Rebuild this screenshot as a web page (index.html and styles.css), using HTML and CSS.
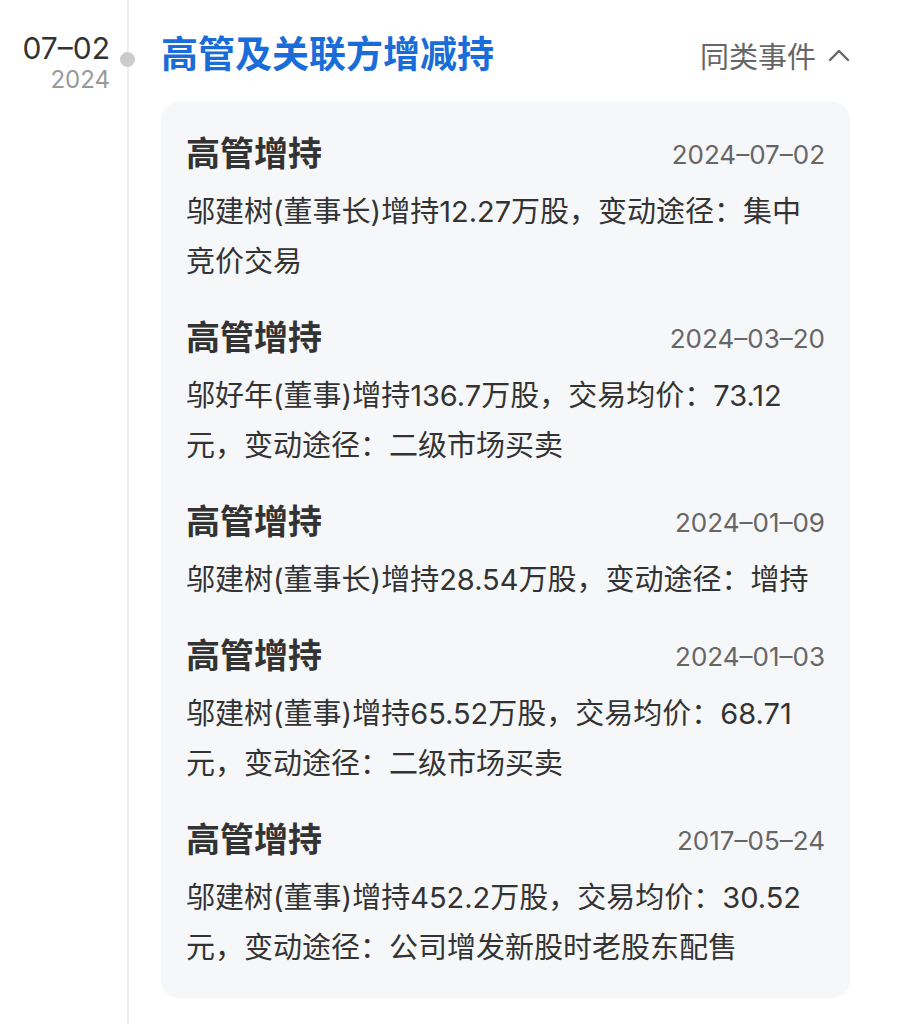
FILE: index.html
```html
<!DOCTYPE html>
<html lang="zh-CN">

<head>
    <meta charset="utf-8">
    <title>高管及关联方增减持</title>
    <link rel="stylesheet" href="styles.css">
</head>

<body>
    <div class="event">
        <div class="event-date">
            <div class="day">07–02</div>
            <div class="year">2024</div>
        </div>

        <div class="event-body">
            <span class="dot"></span>

            <div class="event-head">
                <h1 class="event-title">高管及关联方增减持</h1>
                <div class="similar">
                    同类事件
                    <svg class="chevron" width="22" height="14" viewBox="0 0 22 14">
                        <polyline points="2,12 11,3 20,12" fill="none" stroke="#666" stroke-width="2.4" stroke-linecap="round" stroke-linejoin="round" />
                    </svg>
                </div>
            </div>

            <div class="card">
                <div class="item">
                    <div class="item-head">
                        <span class="item-title">高管增持</span>
                        <span class="item-date">2024–07–02</span>
                    </div>
                    <p class="item-text">邬建树(董事长)增持12.27万股，变动途径：集中竞价交易</p>
                </div>
                <div class="item">
                    <div class="item-head">
                        <span class="item-title">高管增持</span>
                        <span class="item-date">2024–03–20</span>
                    </div>
                    <p class="item-text">邬好年(董事)增持136.7万股，交易均价：73.12元，变动途径：二级市场买卖</p>
                </div>
                <div class="item">
                    <div class="item-head">
                        <span class="item-title">高管增持</span>
                        <span class="item-date">2024–01–09</span>
                    </div>
                    <p class="item-text">邬建树(董事长)增持28.54万股，变动途径：增持</p>
                </div>
                <div class="item">
                    <div class="item-head">
                        <span class="item-title">高管增持</span>
                        <span class="item-date">2024–01–03</span>
                    </div>
                    <p class="item-text">邬建树(董事)增持65.52万股，交易均价：68.71元，变动途径：二级市场买卖</p>
                </div>
                <div class="item">
                    <div class="item-head">
                        <span class="item-title">高管增持</span>
                        <span class="item-date">2017–05–24</span>
                    </div>
                    <p class="item-text">邬建树(董事)增持452.2万股，交易均价：30.52元，变动途径：公司增发新股时老股东配售</p>
                </div>
            </div>
        </div>
    </div>
</body>
</html>
```

FILE: styles.css
```css
body {
    margin: 0;
    font-family: Inter, "Noto Sans CJK SC", sans-serif;
    background-color: #fff;
    color: #333;
}

.event {
    display: flex;
    min-height: 1024px;
}

.event-date {
    width: 110px;
    padding-right: 17px;
    padding-top: 30px;
    text-align: right;
}

.day {
    font-size: 30px;
    line-height: 36px;
    color: #333;
}

.year {
    font-size: 24px;
    line-height: 28px;
    color: #999;
}

.event-body {
    position: relative;
    flex: 1;
    border-left: 2px solid #eeeeee;
    padding: 30px 51px 26px 32px;
}

.dot {
    position: absolute;
    left: -9px;
    top: 52px;
    width: 15px;
    height: 15px;
    border-radius: 50%;
    background-color: #cccccc;
}

.event-head {
    display: flex;
    justify-content: space-between;
    align-items: center;
    height: 50px;
}

.event-title {
    margin: 0;
    font-size: 37px;
    line-height: 50px;
    font-weight: bold;
    color: #1a6dd8;
}

.similar {
    display: flex;
    align-items: center;
    gap: 12px;
    font-size: 29px;
    color: #666;
}

.card {
    margin-top: 22px;
    background-color: #f6f7f9;
    border-radius: 18px;
    padding: 32px 25px 25px;
}

.item {
    margin-bottom: 31px;
}

.item:last-child {
    margin-bottom: 0;
}

.item-head {
    display: flex;
    justify-content: space-between;
    align-items: center;
    margin-bottom: 13px;
}

.item-title {
    font-size: 34px;
    line-height: 40px;
    font-weight: bold;
    color: #333;
}

.item-date {
    font-size: 26px;
    color: #666;
}

.item-text {
    margin: 0;
    font-size: 29px;
    line-height: 50px;
    color: #333;
}
```
